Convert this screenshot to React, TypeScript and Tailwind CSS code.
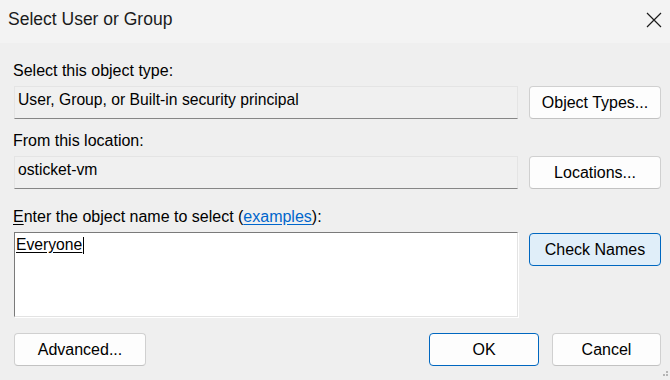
import React from "react";

const font = { fontFamily: '"Liberation Sans", Arial, sans-serif' };

function Btn({
  children,
  primary,
  active,
  className = "",
}: {
  children: React.ReactNode;
  primary?: boolean;
  active?: boolean;
  className?: string;
}) {
  const tone = active
    ? "border-[#0067c0] bg-[#e0eef9]"
    : primary
      ? "border-[#0067c0] bg-[#fdfdfd]"
      : "border-[#d0d0d0] border-b-[#c2c2c2] bg-[#fdfdfd]";
  return (
    <button
      className={`flex h-[33px] shrink-0 items-center justify-center rounded-[4px] border text-[16px] leading-[18px] text-black ${tone} ${className}`}
    >
      {children}
    </button>
  );
}

function ReadOnlyBox({ value }: { value: string }) {
  return (
    <div className="h-[33px] w-[504px] shrink-0 border border-[#e4e4e4] border-b-[#868686] bg-[#f0f0f0] pl-[3px] pt-[4px] text-[15.7px] leading-[18px] text-black">
      {value}
    </div>
  );
}

export default function App() {
  return (
    <div className="relative h-[380px] w-[670px] overflow-hidden bg-[#efefef] text-black" style={font}>
      <div className="flex h-[43px] items-start justify-between bg-[#f3f3f3] pl-[8px] pr-[8px]">
        <span className="mt-[9px] text-[17.5px] leading-[21px] text-[#1b1b1b]">Select User or Group</span>
        <svg className="mt-[12px]" width="16" height="16" viewBox="0 0 16 16">
          <path d="M1 1 L15 15 M15 1 L1 15" stroke="#1b1b1b" strokeWidth="1.2" fill="none" />
        </svg>
      </div>

      <div className="flex flex-col pl-[14px] pr-[9px]">
        <div className="mt-[19px] -ml-px text-[16px] leading-[18px]">Select this object type:</div>
        <div className="mt-[6px] flex gap-[11px]">
          <ReadOnlyBox value="User, Group, or Built-in security principal" />
          <Btn className="w-[132px]">Object Types...</Btn>
        </div>

        <div className="mt-[13px] -ml-px text-[16px] leading-[18px]">From this location:</div>
        <div className="mt-[6px] flex gap-[11px]">
          <ReadOnlyBox value="osticket-vm" />
          <Btn className="w-[132px]">Locations...</Btn>
        </div>

        <div className="mt-[19px] -ml-px text-[16px] leading-[18px]">
          <span className="underline underline-offset-2">E</span>nter the object name to select (
          <span className="text-[#0066cc] underline underline-offset-2">examples</span>):
        </div>
        <div className="mt-[6px] flex items-start gap-[11px]">
          <div className="h-[85px] w-[504px] shrink-0 border border-[#7a7a7a] border-b-[#e3e3e3] border-r-[#e3e3e3] bg-white pl-[1px] pt-[3px] text-[15.7px] leading-[18px] shadow-[1px_1px_0_#ffffff]">
            <span className="underline underline-offset-2">Everyone</span>
            <span className="ml-px inline-block h-[17px] w-px bg-black align-[-4px]" />
          </div>
          <Btn active className="mt-px w-[132px]">
            Check Names
          </Btn>
        </div>

        <div className="mt-[16px] flex items-center">
          <Btn className="w-[132px]">Advanced...</Btn>
          <div className="flex-1" />
          <Btn primary className="w-[110px]">
            OK
          </Btn>
          <Btn className="ml-[13px] w-[109px]">Cancel</Btn>
        </div>
      </div>

      <svg className="absolute bottom-[2px] right-[1px]" width="8" height="8" viewBox="0 0 8 8">
        <rect x="5" y="1" width="2" height="2" fill="#b5b5b5" />
        <rect x="2" y="4" width="2" height="2" fill="#b5b5b5" />
        <rect x="5" y="4" width="2" height="2" fill="#b5b5b5" />
      </svg>
    </div>
  );
}
